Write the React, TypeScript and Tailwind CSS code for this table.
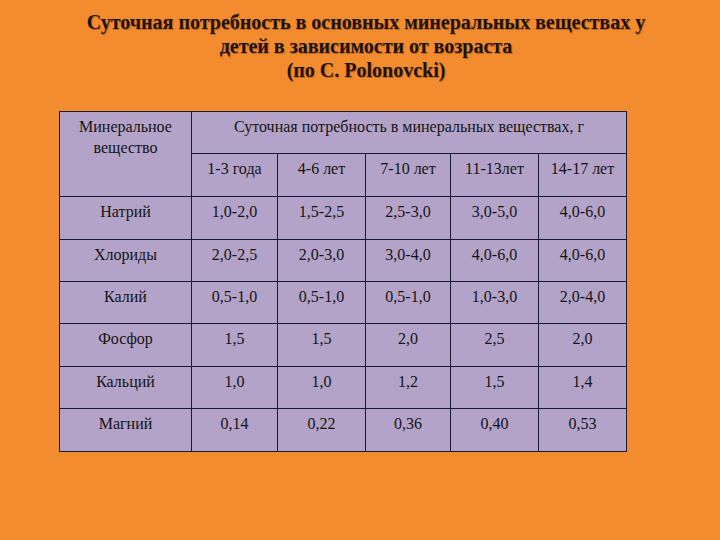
import React from "react";

const ages = ["1-3 года", "4-6 лет", "7-10 лет", "11-13лет", "14-17 лет"];
const rows: [string, string[]][] = [
  ["Натрий", ["1,0-2,0", "1,5-2,5", "2,5-3,0", "3,0-5,0", "4,0-6,0"]],
  ["Хлориды", ["2,0-2,5", "2,0-3,0", "3,0-4,0", "4,0-6,0", "4,0-6,0"]],
  ["Калий", ["0,5-1,0", "0,5-1,0", "0,5-1,0", "1,0-3,0", "2,0-4,0"]],
  ["Фосфор", ["1,5", "1,5", "2,0", "2,5", "2,0"]],
  ["Кальций", ["1,0", "1,0", "1,2", "1,5", "1,4"]],
  ["Магний", ["0,14", "0,22", "0,36", "0,40", "0,53"]],
];

const cell =
  "bg-[#b3a3c8] text-center font-['Liberation_Serif',serif] text-[16px] leading-[21px] pt-[4px] text-[#141414]";

export default function App() {
  return (
    <div className="w-[720px] h-[540px] bg-[#f38b2f] overflow-hidden font-['Liberation_Serif',serif]">
      <div className="pt-[10px] pl-[12px] text-center font-bold text-[20px] leading-[24px] text-[#1c1410] [text-shadow:1px_1px_1px_rgba(90,40,0,0.35)]">
        <div>Суточная потребность в основных минеральных веществах у</div>
        <div>детей в зависимости от возраста</div>
        <div>(по С. Polonovcki)</div>
      </div>
      <div className="mt-[29px] ml-[59px] w-[568px] bg-[#1a1a33] p-px grid gap-px grid-cols-[131px_85px_87px_84px_87px_87px] grid-rows-[41px_42px_42px_41px_41px_42px_41px_42px]">
        <div className={`${cell} row-span-2`}>
          Минеральное
          <br />
          вещество
        </div>
        <div className={`${cell} col-span-5`}>
          Суточная потребность в минеральных веществах, г
        </div>
        {ages.map((a) => (
          <div key={a} className={cell}>
            {a}
          </div>
        ))}
        {rows.map(([name, vals]) => (
          <React.Fragment key={name}>
            <div className={cell}>{name}</div>
            {vals.map((v, i) => (
              <div key={i} className={cell}>
                {v}
              </div>
            ))}
          </React.Fragment>
        ))}
      </div>
    </div>
  );
}
